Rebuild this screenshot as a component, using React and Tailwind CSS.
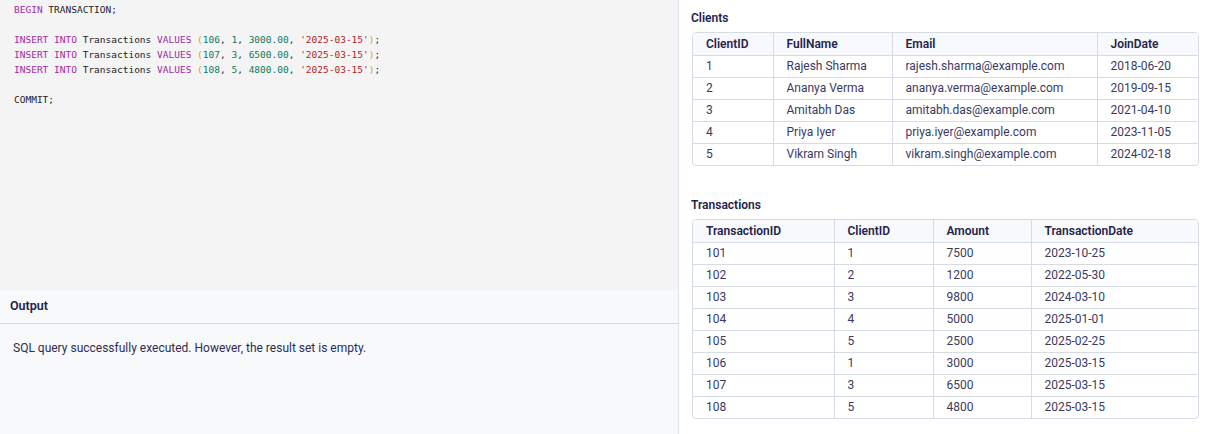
import React from 'react';

const KW = ({ children }) => <span className="text-[#a02aa6]">{children}</span>;
const Num = ({ children }) => <span className="text-[#0f7a62]">{children}</span>;
const Str = ({ children }) => <span className="text-[#b3241c]">{children}</span>;
const Br = ({ children }) => <span className="text-[#c9a43c]">{children}</span>;

const insertRow = (id, client, amount) => (
  <div>
    <KW>INSERT</KW> <KW>INTO</KW> Transactions <KW>VALUES</KW> <Br>(</Br>
    <Num>{id}</Num>, <Num>{client}</Num>, <Num>{amount}</Num>, <Str>'2025-03-15'</Str>
    <Br>)</Br>;
  </div>
);

const clients = [
  ['1', 'Rajesh Sharma', 'rajesh.sharma@example.com', '2018-06-20'],
  ['2', 'Ananya Verma', 'ananya.verma@example.com', '2019-09-15'],
  ['3', 'Amitabh Das', 'amitabh.das@example.com', '2021-04-10'],
  ['4', 'Priya Iyer', 'priya.iyer@example.com', '2023-11-05'],
  ['5', 'Vikram Singh', 'vikram.singh@example.com', '2024-02-18'],
];

const transactions = [
  ['101', '1', '7500', '2023-10-25'],
  ['102', '2', '1200', '2022-05-30'],
  ['103', '3', '9800', '2024-03-10'],
  ['104', '4', '5000', '2025-01-01'],
  ['105', '5', '2500', '2025-02-25'],
  ['106', '1', '3000', '2025-03-15'],
  ['107', '3', '6500', '2025-03-15'],
  ['108', '5', '4800', '2025-03-15'],
];

const DataTable = ({ title, columns, widths, rows, className }) => (
  <div className={className}>
    <h3 className="text-[12px] font-semibold text-[#23224a] leading-[16px] mb-[6px] -ml-px">{title}</h3>
    <div className="border border-[#d6dce6] rounded-[4px] overflow-hidden">
      <table className="w-full border-collapse table-fixed text-[12px]">
        <colgroup>
          {widths.map((w, i) => (
            <col key={i} style={{ width: w }} />
          ))}
        </colgroup>
        <thead>
          <tr className="bg-[#f8f9fd] h-[22px]">
            {columns.map((c, i) => (
              <th
                key={c}
                className={`text-left font-semibold text-[#24234a] px-[13px] py-0 ${i > 0 ? 'border-l border-[#d6dce6]' : ''}`}
              >
                {c}
              </th>
            ))}
          </tr>
        </thead>
        <tbody>
          {rows.map((r, ri) => (
            <tr key={ri} className="h-[22px] border-t border-[#d6dce6]">
              {r.map((v, i) => (
                <td
                  key={i}
                  className={`px-[13px] py-0 text-[#3a3a5e] ${i > 0 ? 'border-l border-[#d6dce6]' : ''}`}
                >
                  {v}
                </td>
              ))}
            </tr>
          ))}
        </tbody>
      </table>
    </div>
  </div>
);

export default function App() {
  return (
    <div className="flex h-[434px] w-full bg-white font-['Roboto',sans-serif]">
      <div className="w-[679px] shrink-0 flex flex-col border-r border-[#dde3ec]">
        <div className="flex-1 bg-[#f4f4f4] pl-[14px] pt-[2px] font-['DejaVu_Sans_Mono',monospace] text-[9.5px] leading-[15px] text-[#1c1c2a] whitespace-pre">
          <div>
            <KW>BEGIN</KW> TRANSACTION;
          </div>
          <div>&nbsp;</div>
          {insertRow(106, 1, '3000.00')}
          {insertRow(107, 3, '6500.00')}
          {insertRow(108, 5, '4800.00')}
          <div>&nbsp;</div>
          <div>COMMIT;</div>
        </div>
        <div className="h-[144px] bg-[#f8f9fb] flex flex-col">
          <div className="h-[34px] border-b border-[#d3dbe8] flex items-center px-[10px] text-[12.5px] font-semibold text-[#23224a]">
            Output
          </div>
          <p className="px-[13px] pt-[15px] text-[12px] text-[#2d2d52]">
            SQL query successfully executed. However, the result set is empty.
          </p>
        </div>
      </div>
      <div className="flex-1 pl-[13px] pr-[13px] pt-[10px]">
        <DataTable
          title="Clients"
          columns={['ClientID', 'FullName', 'Email', 'JoinDate']}
          widths={['80px', '119px', '205px', '101px']}
          rows={clients}
        />
        <DataTable
          title="Transactions"
          className="mt-[31px]"
          columns={['TransactionID', 'ClientID', 'Amount', 'TransactionDate']}
          widths={['141px', '99px', '98px', '167px']}
          rows={transactions}
        />
      </div>
    </div>
  );
}
